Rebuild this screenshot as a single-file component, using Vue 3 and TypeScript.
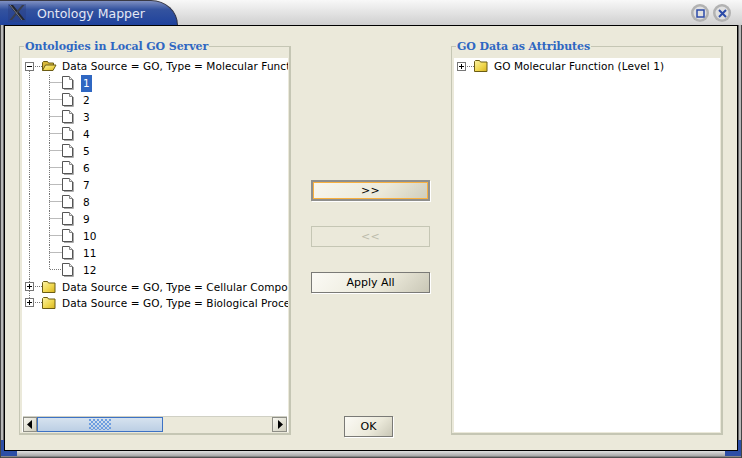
<script setup lang="ts">
interface Child { label: string; selected?: boolean; last?: boolean }
const children: Child[] = Array.from({ length: 12 }, (_, i) => ({
  label: String(i + 1),
  selected: i === 0,
  last: i === 11,
}))
</script>

<template>
  <div class="screen">
    <svg class="defs" width="0" height="0">
      <defs>
        <linearGradient id="folderFill" x1="0" y1="0" x2="1" y2="1">
          <stop offset="0" stop-color="#fbf3a8" />
          <stop offset="0.55" stop-color="#f0d850" />
          <stop offset="1" stop-color="#d8b420" />
        </linearGradient>
      </defs>
    </svg>
    <header class="titlebar">
      <div class="tab">
        <svg class="logo" width="18" height="18" viewBox="0 0 18 18">
          <rect width="18" height="18" fill="#2a3f80" opacity=".45" />
          <path d="M1 1h4l12 15h-4z" fill="#23262e" />
          <path d="M14 1h2.500L4 16H1.500z" fill="#3a3f4c" />
          <path d="M2 1l12 15" stroke="#9a9ea8" stroke-width=".7" fill="none" />
        </svg>
        <span class="title">Ontology Mapper</span>
      </div>
      <div class="controls">
        <span class="ctl">
          <svg width="9" height="9" viewBox="0 0 9 9"><rect x="1" y="1" width="7" height="7" fill="none" stroke="#2b4aa8" stroke-width="1.500" /></svg>
        </span>
        <span class="ctl">
          <svg width="9" height="9" viewBox="0 0 9 9"><path d="M1 1l7 7M8 1L1 8" stroke="#2b4aa8" stroke-width="2" /></svg>
        </span>
      </div>
    </header>

    <main class="client">
      <fieldset class="group">
        <legend>Ontologies in Local GO Server</legend>
        <div class="tree">
          <div class="rows">
            <div class="row">
              <svg class="conn" width="20" height="17" viewBox="0 0 20 17">
                <path d="M7.500 13v4M13 8.500h7" class="dots" />
                <rect x="3.500" y="4.500" width="8" height="8" fill="#fff" stroke="#777" />
                <path d="M5 8.500h5" stroke="#000" />
              </svg>
              <svg class="ficon" width="20" height="17" viewBox="0 0 20 17">
                <path d="M.500 12.500V4.500l1-1h4l1 1.500h5v2" fill="#d8b83a" stroke="#6b5c14" />
                <path d="M.500 12.500l3-5.500h10.500l-3 5.500z" fill="url(#folderFill)" stroke="#6b5c14" />
              </svg>
              <span class="label">Data Source = GO, Type = Molecular Funct</span>
            </div>
            <div v-for="c in children" :key="c.label" class="row">
              <svg class="conn" width="40" height="17" viewBox="0 0 40 17">
                <path d="M7.500 0v17" class="dots" />
                <path :d="c.last ? 'M27.500 0v7.500H40' : 'M27.500 0v17M27.500 7.500H40'" class="dots" />
              </svg>
              <svg class="doc" width="14" height="17" viewBox="0 0 14 17">
                <path d="M.500 1.500h7l3 3v9h-10z" fill="#fff" stroke="#555" />
                <path d="M7.500 1.500v3h3" fill="#eee" stroke="#888" />
                <path d="M11.500 5v9.500H2" fill="none" stroke="#aaa" />
              </svg>
              <span class="num" :class="{ selected: c.selected }">{{ c.label }}</span>
            </div>
            <div class="row short">
              <svg class="conn" width="20" height="16" viewBox="0 0 20 16">
                <path d="M7.500 0v16M13 7.500h7" class="dots" />
                <rect x="3.500" y="3.500" width="8" height="8" fill="#fff" stroke="#777" />
                <path d="M5 7.500h5M7.500 5v5" stroke="#000" />
              </svg>
              <svg class="ficon" width="20" height="16" viewBox="0 0 20 16">
                <path d="M.500 13.500v-10l1-1h4l1 1.500h6.500v9.500z" fill="url(#folderFill)" stroke="#6b5c14" />
              </svg>
              <span class="label">Data Source = GO, Type = Cellular Compo</span>
            </div>
            <div class="row short">
              <svg class="conn" width="20" height="16" viewBox="0 0 20 16">
                <path d="M7.500 0v3M13 7.500h7" class="dots" />
                <rect x="3.500" y="3.500" width="8" height="8" fill="#fff" stroke="#777" />
                <path d="M5 7.500h5M7.500 5v5" stroke="#000" />
              </svg>
              <svg class="ficon" width="20" height="16" viewBox="0 0 20 16">
                <path d="M.500 13.500v-10l1-1h4l1 1.500h6.500v9.500z" fill="url(#folderFill)" stroke="#6b5c14" />
              </svg>
              <span class="label">Data Source = GO, Type = Biological Proce</span>
            </div>
          </div>
          <div class="scrollbar">
            <span class="sb-btn first">
              <svg width="6" height="9" viewBox="0 0 6 9"><path d="M5 0v9L0 4.500z" fill="#000" /></svg>
            </span>
            <span class="thumb"><i class="grip"></i></span>
            <span class="track"></span>
            <span class="sb-btn">
              <svg width="6" height="9" viewBox="0 0 6 9"><path d="M1 0v9l5-4.500z" fill="#000" /></svg>
            </span>
          </div>
        </div>
      </fieldset>

      <div class="middle">
        <div class="actions">
          <button class="btn focused" type="button">&gt;&gt;</button>
          <button class="btn disabled" type="button">&lt;&lt;</button>
          <button class="btn" type="button">Apply All</button>
        </div>
        <button class="btn ok" type="button">OK</button>
      </div>

      <fieldset class="group">
        <legend>GO Data as Attributes</legend>
        <div class="tree">
          <div class="rows">
            <div class="row">
              <svg class="conn" width="20" height="17" viewBox="0 0 20 17">
                <path d="M13 8.500h7" class="dots" />
                <rect x="3.500" y="4.500" width="8" height="8" fill="#fff" stroke="#777" />
                <path d="M5 8.500h5M7.500 6v5" stroke="#000" />
              </svg>
              <svg class="ficon" width="20" height="17" viewBox="0 0 20 17">
                <path d="M.500 13.500v-10l1-1h4l1 1.500h6.500v9.500z" fill="url(#folderFill)" stroke="#6b5c14" />
              </svg>
              <span class="label">GO Molecular Function (Level 1)</span>
            </div>
          </div>
        </div>
      </fieldset>
    </main>

    <footer class="statusbar">
      <span class="corner"></span>
      <span class="corner"></span>
    </footer>
  </div>
</template>

<style>
html, body { margin: 0; background: #777; }
</style>

<style scoped>
.screen {
  width: 742px;
  height: 458px;
  display: flex;
  flex-direction: column;
  overflow: hidden;
  background:
    linear-gradient(#2d4ea6, #2d4ea6) 1px 440px / 3px 18px no-repeat,
    linear-gradient(#2d4ea6, #2d4ea6) 738px 440px / 3px 18px no-repeat,
    linear-gradient(90deg, #444 0 1px, #b8b8b8 1px 3px, #666 3px 739px, #b8b8b8 739px 741px, #444 741px);
  font-family: "DejaVu Sans", sans-serif;
}
.defs { display: block; flex: none; }
.titlebar {
  height: 25px;
  flex: none;
  display: flex;
  justify-content: space-between;
  background: linear-gradient(#f8f8f8, #cfcfcf);
}
.tab {
  width: 178px;
  display: flex;
  align-items: center;
  gap: 11px;
  padding-left: 8px;
  box-sizing: border-box;
  border-top-right-radius: 27px 25px;
  border-top: 1px solid #3a3a44;
  border-right: 1px solid #2a2f44;
  background: linear-gradient(#7f90c2, #34539f 35%, #1f429c);
}
.logo { flex: none; }
.title {
  color: #e4e8f4;
  font-size: 12.5px;
  white-space: nowrap;
}
.controls {
  display: flex;
  gap: 4px;
  padding: 4px 11px 0 0;
}
.ctl {
  width: 18px;
  height: 18px;
  border-radius: 50%;
  display: flex;
  align-items: center;
  justify-content: center;
  background: #e0e0e0;
  box-shadow: inset 0 0 0 2.500px #b2b2b2;
}
.client {
  flex: 1;
  min-height: 0;
  margin: 0 4px;
  border: 1px solid #000;
  box-sizing: border-box;
  background: #ebe9da;
  display: flex;
  gap: 20px;
  padding: 14px 14px 15px;
}
.group {
  flex: none;
  width: 272px;
  box-sizing: border-box;
  margin: 0;
  padding: 5px 1px 1px 2px;
  border: 1px solid #c5c6b4;
  border-width: 1px 2px 2px 1px;
  min-width: 0;
  display: flex;
  flex-direction: column;
}
legend {
  margin-left: 2px;
  padding: 0 1px;
  color: #2f67c2;
  font: bold 11px/13px "DejaVu Serif", serif;
  letter-spacing: -0.1px;
  white-space: nowrap;
}
.tree {
  flex: 1;
  min-height: 0;
  background: #fff;
  display: flex;
  flex-direction: column;
  overflow: hidden;
}
.rows { flex: 1; }
.row {
  height: 17px;
  display: flex;
  align-items: flex-start;
  white-space: nowrap;
  overflow: hidden;
  font-size: 10.5px;
  letter-spacing: 0.07px;
  line-height: 17px;
  color: #000;
}
.row.short { height: 16px; line-height: 16px; }
.conn, .ficon, .doc { flex: none; }
.dots {
  fill: none;
  stroke: #777;
  stroke-dasharray: 1 1;
}
.num {
  margin-left: 5px;
  padding: 0 2px;
}
.num.selected { background: #2f67c2; color: #fff; }
.scrollbar {
  flex: none;
  height: 16px;
  margin: 0 1px;
  display: flex;
  background: #ebe9da;
  border-top: 1px solid #d0d0c4;
  box-sizing: border-box;
}
.sb-btn {
  flex: none;
  width: 15px;
  display: flex;
  align-items: center;
  justify-content: center;
  background: linear-gradient(135deg, #f8f7f0, #d0cebd);
  border: 1px solid #8e8e86;
  box-sizing: border-box;
}
.sb-btn.first { width: 14px; }
.thumb {
  flex: none;
  width: 126px;
  box-sizing: border-box;
  border: 1px solid #3d72c4;
  background: linear-gradient(#d6e2ef, #bccfe4);
  display: flex;
  align-items: center;
  justify-content: center;
}
.grip {
  width: 22px;
  height: 11px;
  background-image:
    radial-gradient(circle at 1px 1px, #6a9be0 .7px, transparent .9px),
    radial-gradient(circle at 3px 3px, #6a9be0 .7px, transparent .9px);
  background-size: 4px 4px;
}
.track { flex: 1; }
.middle {
  flex: none;
  width: 120px;
  display: flex;
  flex-direction: column;
  justify-content: space-between;
  align-items: flex-start;
  padding: 140px 0 0;
  box-sizing: border-box;
}
.actions {
  display: flex;
  flex-direction: column;
  gap: 25px;
  width: 119px;
}
.btn {
  height: 21px;
  width: 100%;
  padding: 0;
  box-sizing: border-box;
  border: 1px solid #7a7a76;
  background: linear-gradient(135deg, #fbfaf5, #ebe9da 60%, #c9c7b6);
  box-shadow: 1px 1px 0 #fff;
  font: 11px "DejaVu Sans", sans-serif;
  color: #000;
}
.btn.focused {
  border: 2px solid #8f8f8c;
  box-shadow: inset 0 0 0 1px #f8b040, 1px 1px 0 #fff;
  background: linear-gradient(135deg, #f8f7f0, #ebe9da 60%, #cfcdbc);
  letter-spacing: 0.4px;
}
.btn.disabled {
  border-color: #c5c6b4;
  background: #ebe9da;
  box-shadow: none;
  color: #bcbcac;
  letter-spacing: 0.4px;
}
.btn.ok {
  width: 49px;
  flex: none;
  margin: 0 0 -2px 33px;
}
.statusbar {
  height: 7px;
  flex: none;
  margin: 0 1px;
  display: flex;
  justify-content: space-between;
  background: linear-gradient(#e0e0e0, #a8a8a8 70%, #333);
}
.corner { width: 16px; height: 5px; background: #2d4ea6; }
</style>
